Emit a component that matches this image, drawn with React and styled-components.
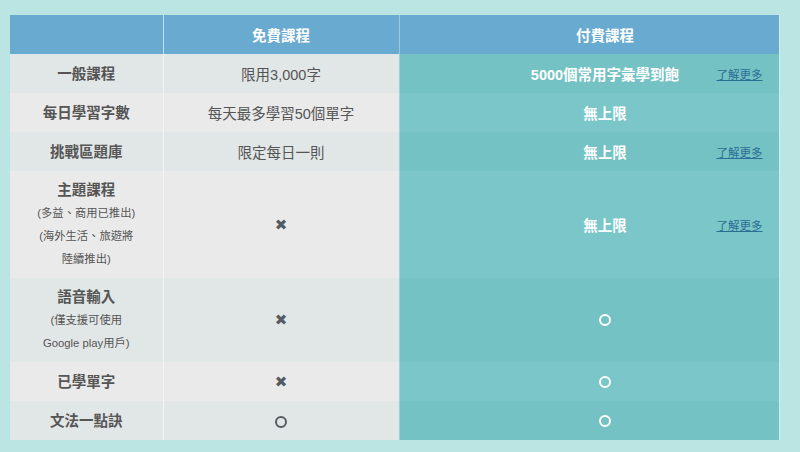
import styled, { createGlobalStyle } from 'styled-components'

const GlobalStyle = createGlobalStyle`
  body {
    margin: 0;
    background: #bae5e2;
    font-family: "Liberation Sans", "Noto Sans CJK TC", sans-serif;
  }
`

const rows = [
  { label: "一般課程", free: "限用3,000字", paid: "5000個常用字彙學到飽", more: true },
  { label: "每日學習字數", free: "每天最多學習50個單字", paid: "無上限" },
  { label: "挑戰區題庫", free: "限定每日一則", paid: "無上限", more: true },
  {
    label: "主題課程",
    notes: ["(多益、商用已推出)", "(海外生活、旅遊將", "陸續推出)"],
    free: "x",
    paid: "無上限",
    more: true,
  },
  { label: "語音輸入", notes: ["(僅支援可使用", "Google play用戶)"], free: "x", paid: "o" },
  { label: "已學單字", free: "x", paid: "o" },
  { label: "文法一點訣", free: "o", paid: "o" },
]

function Mark({ value, light }) {
  if (value === "x") return <Cross>✖</Cross>
  if (value === "o") return <Ring $light={light} />
  return value
}

function App() {
  return (
    <>
      <GlobalStyle />
      <Page>
        <Table>
          <colgroup>
            <col style={{ width: 153 }} />
            <col style={{ width: 236 }} />
            <col style={{ width: 380 }} />
          </colgroup>
          <thead>
            <tr>
              <HeadCell />
              <HeadCell>免費課程</HeadCell>
              <HeadCell $paid>付費課程</HeadCell>
            </tr>
          </thead>
          <tbody>
            {rows.map((row, i) => (
              <Row key={row.label} $alt={i % 2 === 1}>
                <LabelCell>
                  <Label>{row.label}</Label>
                  {row.notes?.map((n) => (
                    <Note key={n}>{n}</Note>
                  ))}
                </LabelCell>
                <FreeCell>
                  <Mark value={row.free} />
                </FreeCell>
                <PaidCell>
                  <PaidInner>
                    <span />
                    <PaidText>
                      <Mark value={row.paid} light />
                    </PaidText>
                    {row.more ? <More href="#">了解更多</More> : <span />}
                  </PaidInner>
                </PaidCell>
              </Row>
            ))}
          </tbody>
        </Table>
      </Page>
    </>
  )
}

export default App

const Page = styled.div`
  width: 800px;
  height: 452px;
  padding: 15px 0 0 10px;
  box-sizing: border-box;
`

const Table = styled.table`
  width: 769px;
  border-collapse: collapse;
  table-layout: fixed;
  font-size: 14.5px;
`

const HeadCell = styled.th`
  height: 39px;
  padding: 0 0 0 ${(p) => (p.$paid ? '32px' : '0')};
  background: #69aad0;
  color: #fff;
  font-weight: 700;
  font-size: 14.5px;
  text-align: center;
  border-left: 1px solid ${(p) => (p.$paid ? 'rgba(255,255,255,0.35)' : 'rgba(255,255,255,0.6)')};
  border-right: ${(p) => (p.$paid ? '1px solid rgba(255,255,255,0.35)' : 'none')};
  &:first-child {
    border-left: none;
  }
`

const Row = styled.tr`
  --grey: ${(p) => (p.$alt ? '#eaeaea' : '#e1e6e6')};
  --teal: ${(p) => (p.$alt ? '#7bc6c8' : '#74c2c3')};
`

const LabelCell = styled.td`
  height: 39px;
  padding: 7px 0;
  background: var(--grey);
  text-align: center;
  vertical-align: middle;
  border-right: 1px solid #f4f4f4;
  box-sizing: border-box;
`

const Label = styled.div`
  color: #555;
  font-weight: 700;
  font-size: 14.5px;
  line-height: 24px;
`

const Note = styled.div`
  color: #555;
  font-size: 11.3px;
  line-height: 23px;
`

const FreeCell = styled.td`
  background: var(--grey);
  color: #555;
  text-align: center;
  vertical-align: middle;
`

const PaidCell = styled.td`
  background: var(--teal);
  padding: 0 0 0 32px;
  vertical-align: middle;
  border-left: 1px solid rgba(255, 255, 255, 0.25);
  border-right: 1px solid rgba(255, 255, 255, 0.35);
`

const PaidInner = styled.div`
  display: grid;
  grid-template-columns: 1fr auto 1fr;
  align-items: center;
`

const PaidText = styled.div`
  color: #fff;
  font-weight: 700;
  font-size: 14.5px;
  display: flex;
  justify-content: center;
`

const More = styled.a`
  justify-self: end;
  margin-right: 16px;
  color: #2b6e94;
  font-size: 11.5px;
  text-decoration: underline;
`

const Cross = styled.span`
  font-family: "DejaVu Sans", sans-serif;
  font-size: 15px;
  color: #555c60;
`

const Ring = styled.span`
  display: inline-block;
  width: 12px;
  height: 12px;
  box-sizing: border-box;
  border: 2px solid ${(p) => (p.$light ? '#fff' : '#555c60')};
  border-radius: 50%;
  vertical-align: middle;
`
